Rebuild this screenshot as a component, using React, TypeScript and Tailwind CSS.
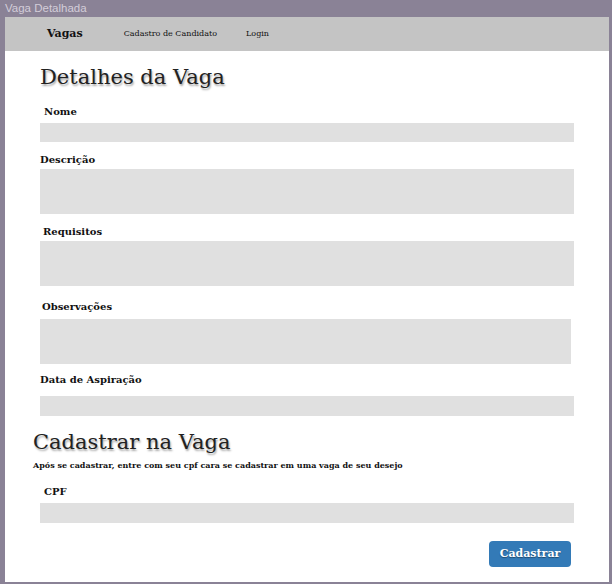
export default function App() {
  const slab = "font-['DejaVu_Serif','Liberation_Serif',serif]";

  const Field = ({
    label,
    labelClass,
    inputClass,
  }: {
    label: string;
    labelClass: string;
    inputClass: string;
  }) => (
    <>
      <div className={`h-[14px] leading-[14px] text-[10px] font-bold text-[#111] ${labelClass}`}>{label}</div>
      <div className={`bg-[#e0e0e0] ${inputClass}`} />
    </>
  );

  return (
    <div className={`w-[612px] h-[584px] bg-[#8a8296] flex flex-col ${slab}`}>
      {/* window title */}
      <div className="h-[17px] pl-[5px] text-[11.5px] leading-[17px] text-[#d3cdd9] font-['Liberation_Sans',sans-serif]">
        Vaga Detalhada
      </div>

      <div className="flex-1 ml-[5px] mr-[3px] mb-[2px] bg-white flex flex-col">
        {/* nav */}
        <nav className="h-[34px] bg-[#c4c4c4] flex items-center text-[#111]">
          <span className="ml-[42px] text-[11px] font-bold">Vagas</span>
          <span className="ml-[41px] text-[8px]">Cadastro de Candidato</span>
          <span className="ml-[29px] text-[8px]">Login</span>
        </nav>

        <div className="px-[35px] flex flex-col">
          <h1 className="mt-[12px] h-[28px] leading-[28px] text-[21px] font-light text-[#222] [text-shadow:1px_2px_2px_rgba(0,0,0,0.35)]">
            Detalhes da Vaga
          </h1>

          <Field label="Nome" labelClass="mt-[14px] ml-[4px]" inputClass="mt-[4px] h-[19px]" />
          <Field label="Descrição" labelClass="mt-[11px]" inputClass="mt-[2px] h-[45px]" />
          <Field label="Requisitos" labelClass="mt-[11px] ml-[3px]" inputClass="mt-[2px] h-[45px]" />
          <Field label="Observações" labelClass="mt-[14px] ml-[2px]" inputClass="mt-[5px] h-[45px] mr-[3px]" />
          <Field label="Data de Aspiração" labelClass="mt-[9px]" inputClass="mt-[9px] h-[20px]" />

          <h2 className="-ml-[7px] mt-[12px] h-[28px] leading-[28px] text-[21px] font-light text-[#222] [text-shadow:1px_2px_2px_rgba(0,0,0,0.35)]">
            Cadastrar na Vaga
          </h2>
          <p className="-ml-[7px] mt-[3px] h-[12px] leading-[12px] text-[8px] font-bold text-[#111]">
            Após se cadastrar, entre com seu cpf cara se cadastrar em uma vaga de seu desejo
          </p>

          <Field label="CPF" labelClass="mt-[14px] ml-[4px]" inputClass="mt-[4px] h-[20px]" />

          <div className="flex justify-end mt-[18px] mr-[3px]">
            <button className="h-[26px] w-[82px] rounded-[4px] bg-[#337ab7] text-white text-[11px] font-bold [text-shadow:0_1px_1px_rgba(0,0,0,0.4)]">
              Cadastrar
            </button>
          </div>
        </div>
      </div>
    </div>
  );
}
